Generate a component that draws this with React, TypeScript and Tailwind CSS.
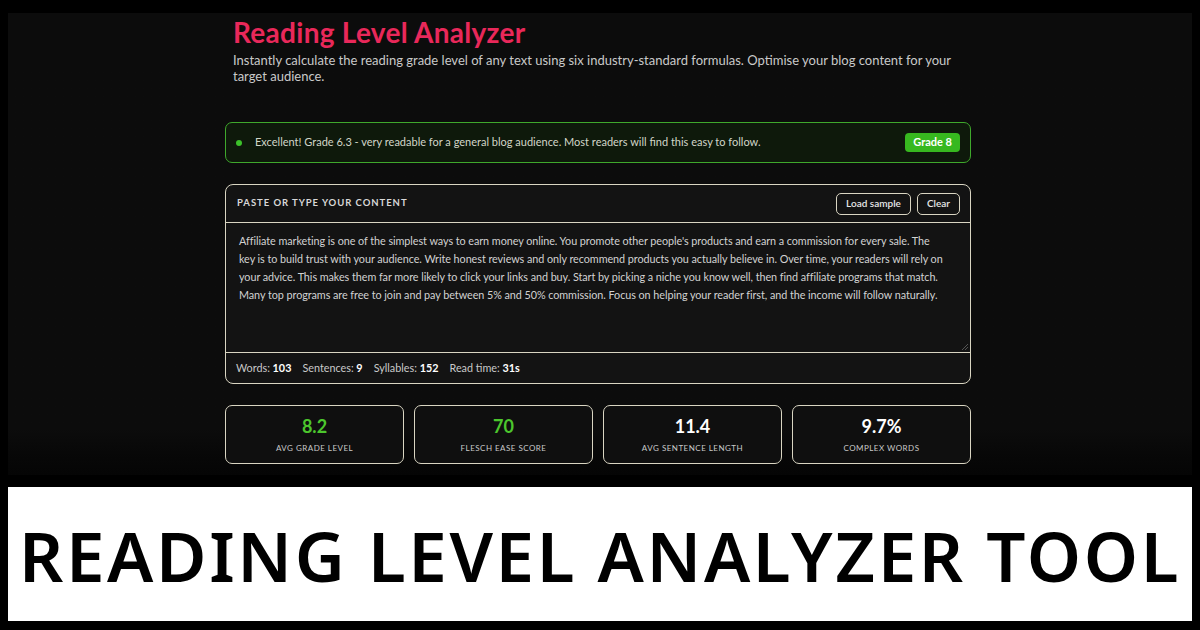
import React from "react";

const sampleLines = [
  "Affiliate marketing is one of the simplest ways to earn money online. You promote other people's products and earn a commission for every sale. The",
  "key is to build trust with your audience. Write honest reviews and only recommend products you actually believe in. Over time, your readers will rely on",
  "your advice. This makes them far more likely to click your links and buy. Start by picking a niche you know well, then find affiliate programs that match.",
  "Many top programs are free to join and pay between 5% and 50% commission. Focus on helping your reader first, and the income will follow naturally.",
];

const stats = [
  { value: "8.2", label: "Avg grade level", green: true },
  { value: "70", label: "Flesch ease score", green: true },
  { value: "11.4", label: "Avg sentence length", green: false },
  { value: "9.7%", label: "Complex words", green: false },
];

export default function App() {
  return (
    <div
      className="w-[1200px] h-[630px] bg-black overflow-hidden flex flex-col px-[8px] pt-[13px]"
      style={{ fontFamily: "Lato, 'Noto Sans', sans-serif" }}
    >
      <div className="h-[462px] bg-gradient-to-b from-[#0c0c0c] from-90% to-[#050505]">
        <div className="w-[746px] ml-[217px] pt-[1px]">
          <h1 className="pl-[8px] text-[28px] leading-[36px] font-bold tracking-[0.01em] text-[#e9285a]">
            Reading Level Analyzer
          </h1>
          <p className="text-[13px] leading-[16px] text-[#c9c9c9] mt-[2px] pl-[8px] pr-[10px]">
            Instantly calculate the reading grade level of any text using six industry-standard formulas. Optimise your blog content for your target audience.
          </p>

          <div className="mt-[38px] h-[41px] rounded-[7px] border-[1.5px] border-[#3fa82c] bg-[#0e190b] flex items-center pl-[10px] pr-[10px]">
            <span className="w-[6px] h-[6px] rounded-full bg-[#3cc12a]" />
            <span className="ml-[13px] text-[11px] text-[#d2d6c8] flex-1">
              Excellent! Grade 6.3 - very readable for a general blog audience. Most readers will find this easy to follow.
            </span>
            <span className="h-[19px] px-[8px] rounded-[4px] bg-[#37b81f] text-white text-[11px] font-bold flex items-center">
              Grade 8
            </span>
          </div>

          <div className="mt-[21px] rounded-[8px] border-[1.5px] border-[#d9d5c2] bg-[#131313] overflow-hidden">
            <div className="h-[38px] flex items-center justify-between pl-[11px] pr-[10px] border-b-[1.5px] border-[#d9d5c2]">
              <span className="text-[9.5px] tracking-[0.1em] font-bold text-[#d8d8d8] uppercase">
                Paste or type your content
              </span>
              <div className="flex gap-[6px]">
                <button className="h-[22px] px-[9px] rounded-[5px] border-[1.5px] border-[#d9d5c2] text-[10px] text-[#e6e6e6] font-semibold">
                  Load sample
                </button>
                <button className="h-[22px] px-[9px] rounded-[5px] border-[1.5px] border-[#d9d5c2] text-[10px] text-[#e6e6e6] font-semibold">
                  Clear
                </button>
              </div>
            </div>
            <div className="h-[130px] px-[13px] pt-[9px] border-b-[1.5px] border-[#d9d5c2] relative">
              <p className="text-[10.8px] leading-[18px] tracking-[-0.005em] text-[#d2d2d2] whitespace-nowrap">
                {sampleLines.map((line, i) => (
                  <React.Fragment key={i}>
                    {line}
                    {i < sampleLines.length - 1 && <br />}
                  </React.Fragment>
                ))}
              </p>
              <svg className="absolute right-[2px] bottom-[2px]" width="6" height="6" viewBox="0 0 6 6">
                <path d="M6 0 L0 6 M6 3 L3 6" stroke="#666" strokeWidth="0.8" />
              </svg>
            </div>
            <div className="h-[30px] flex items-center gap-[11px] px-[10px] text-[10.8px] text-[#c9c9c9]">
              <span>Words: <b className="text-white font-bold">103</b></span>
              <span>Sentences: <b className="text-white font-bold">9</b></span>
              <span>Syllables: <b className="text-white font-bold">152</b></span>
              <span>Read time: <b className="text-white font-bold">31s</b></span>
            </div>
          </div>

          <div className="mt-[21px] grid grid-cols-4 gap-[10px]">
            {stats.map((s) => (
              <div
                key={s.label}
                className="h-[59px] rounded-[7px] border-[1.5px] border-[#d9d5c2] bg-[#0f0f0f] flex flex-col items-center justify-center"
              >
                <span
                  className={
                    "text-[18px] leading-[22px] font-bold " +
                    (s.green ? "text-[#4cc62d]" : "text-white")
                  }
                >
                  {s.value}
                </span>
                <span className="mt-[5px] text-[8px] tracking-[0.06em] uppercase text-[#c9c9c9]">
                  {s.label}
                </span>
              </div>
            ))}
          </div>
        </div>
      </div>

      <div className="mt-[12px] h-[134px] bg-white flex items-center justify-center">
        <span
          className="text-[69px] font-semibold text-black tracking-[0.038em] leading-none pt-[3px]"
          style={{ fontFamily: "'Noto Sans', sans-serif" }}
        >
          READING LEVEL ANALYZER TOOL
        </span>
      </div>
    </div>
  );
}
